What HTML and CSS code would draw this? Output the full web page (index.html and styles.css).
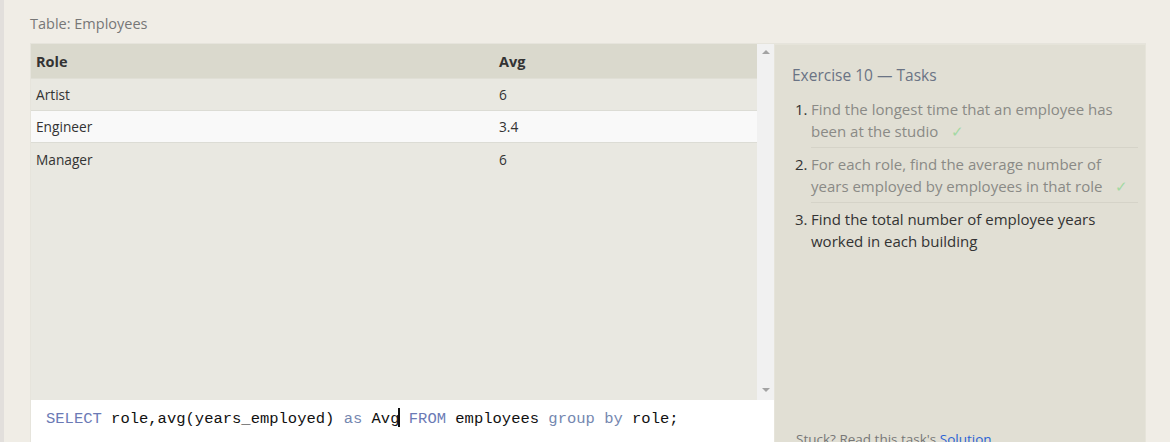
FILE: index.html
```html
<!DOCTYPE html>
<html>
<head>
<meta charset="utf-8">
<link rel="stylesheet" href="styles.css">
</head>
<body>
<div class="page">
  <div class="caption">Table: Employees</div>
  <div class="workspace">
    <div class="left">
      <div class="table-area">
        <div class="table">
          <div class="row head"><div class="c1">Role</div><div class="c2">Avg</div></div>
          <div class="row"><div class="c1">Artist</div><div class="c2">6</div></div>
          <div class="row alt"><div class="c1">Engineer</div><div class="c2">3.4</div></div>
          <div class="row last"><div class="c1">Manager</div><div class="c2">6</div></div>
        </div>
        <div class="scrollbar">
          <span class="arrow up"></span>
          <span class="arrow down"></span>
        </div>
      </div>
      <div class="editor"><span class="kw">SELECT</span> role,avg(years_employed) <span class="kw2">as</span> Avg<span class="cursor"></span> <span class="kw">FROM</span> employees <span class="kw2">group by</span> role;</div>
    </div>
    <div class="right">
      <div class="ex-title">Exercise 10 — Tasks</div>
      <div class="tasks">
        <div class="task done"><span class="num">1.</span><div class="txt">Find the longest time that an employee has been at the studio <span class="check">✓</span></div></div>
        <div class="task done"><span class="num">2.</span><div class="txt">For each role, find the average number of years employed by employees in that role <span class="check">✓</span></div></div>
        <div class="task current"><span class="num">3.</span><div class="txt">Find the total number of employee years worked in each building</div></div>
      </div>
      <div class="spacer"></div>
      <div class="stuck">Stuck? Read this task's <span class="link">Solution</span>.</div>
    </div>
  </div>
</div>
</body>
</html>
```
FILE: styles.css
```css
html, body {
  margin: 0;
  padding: 0;
  height: 442px;
  overflow: hidden;
}
body {
  background: #f0ede6;
  font-family: "Open Sans", "Noto Sans", sans-serif;
  color: #333;
}
.page {
  border-left: 4px solid #e2dfdc;
  height: 442px;
  box-sizing: border-box;
  display: flex;
  flex-direction: column;
}
.caption {
  height: 43px;
  box-sizing: border-box;
  padding: 14px 0 0 26px;
  font-size: 14.5px;
  color: #777;
  line-height: 20px;
}
.workspace {
  display: flex;
  margin-left: 26px;
  width: 1116px;
  flex: 1;
  border-top: 1px solid #e6e4dc;
  box-sizing: border-box;
}
.left {
  width: 744px;
  display: flex;
  flex-direction: column;
  border-left: 1px solid #e6e4dc;
  box-sizing: border-box;
}
.table-area {
  height: 356px;
  display: flex;
  background: #e9e8e1;
}
.table {
  flex: 1;
  font-size: 13.7px;
}
.row {
  display: flex;
  height: 32px;
  box-sizing: border-box;
  border-bottom: 1px solid #dcdcd5;
  align-items: center;
  color: #333;
}
.row.last {
  border-bottom: none;
}
.row.head {
  height: 35px;
  background: #dad9cd;
  font-weight: bold;
  font-size: 14.5px;
  border-bottom: 1px solid #e0dfd6;
}
.row.alt {
  background: #f9f9f9;
}
.c1 {
  width: 463px;
  padding-left: 5px;
}
.c2 {
  flex: 1;
}
.scrollbar {
  width: 17px;
  background: #f1f1f1;
  position: relative;
}
.arrow {
  position: absolute;
  left: 5px;
  width: 0;
  height: 0;
  border-left: 4px solid transparent;
  border-right: 4px solid transparent;
}
.arrow.up {
  top: 6px;
  border-bottom: 4px solid #a3a3a3;
}
.arrow.down {
  bottom: 8px;
  border-top: 4px solid #a3a3a3;
}
.editor {
  flex: 1;
  background: #fff;
  font-family: "Liberation Mono", "DejaVu Sans Mono", monospace;
  font-size: 15.5px;
  line-height: 20px;
  padding: 8px 0 0 15px;
  color: #111;
  white-space: pre;
}
.kw {
  color: #6b7ab5;
}
.kw2 {
  color: #7587b0;
}
.cursor {
  display: inline-block;
  width: 2px;
  height: 19px;
  background: #111;
  vertical-align: -4px;
  margin-left: -1px;
  margin-right: -1px;
}
.right {
  width: 372px;
  background: #e1dfd4;
  border: 1px solid #e6e4da;
  border-bottom: none;
  box-sizing: border-box;
  display: flex;
  flex-direction: column;
  padding: 19px 7px 0 17px;
}
.ex-title {
  font-size: 15.5px;
  color: #6a7384;
  line-height: 22px;
  margin-bottom: 12px;
}
.task {
  display: flex;
  font-size: 15px;
  line-height: 22px;
}
.num {
  width: 19px;
  padding-left: 3px;
  box-sizing: border-box;
  color: #333;
  flex: none;
}
.txt {
  flex: 1;
  padding: 0 0 5px 0;
  border-bottom: 1px solid #d5d3c8;
  margin-bottom: 5px;
}
.task.done .txt {
  color: #8a8a86;
}
.task.current .txt {
  border-bottom: none;
  color: #333;
}
.check {
  color: #a3d9a3;
  margin-left: 9px;
}
.spacer {
  flex: 1;
}
.stuck {
  font-size: 13.5px;
  color: #777;
  line-height: 18px;
  margin-bottom: -6px;
  padding-left: 4px;
}
.link {
  color: #2a63d4;
}
```
